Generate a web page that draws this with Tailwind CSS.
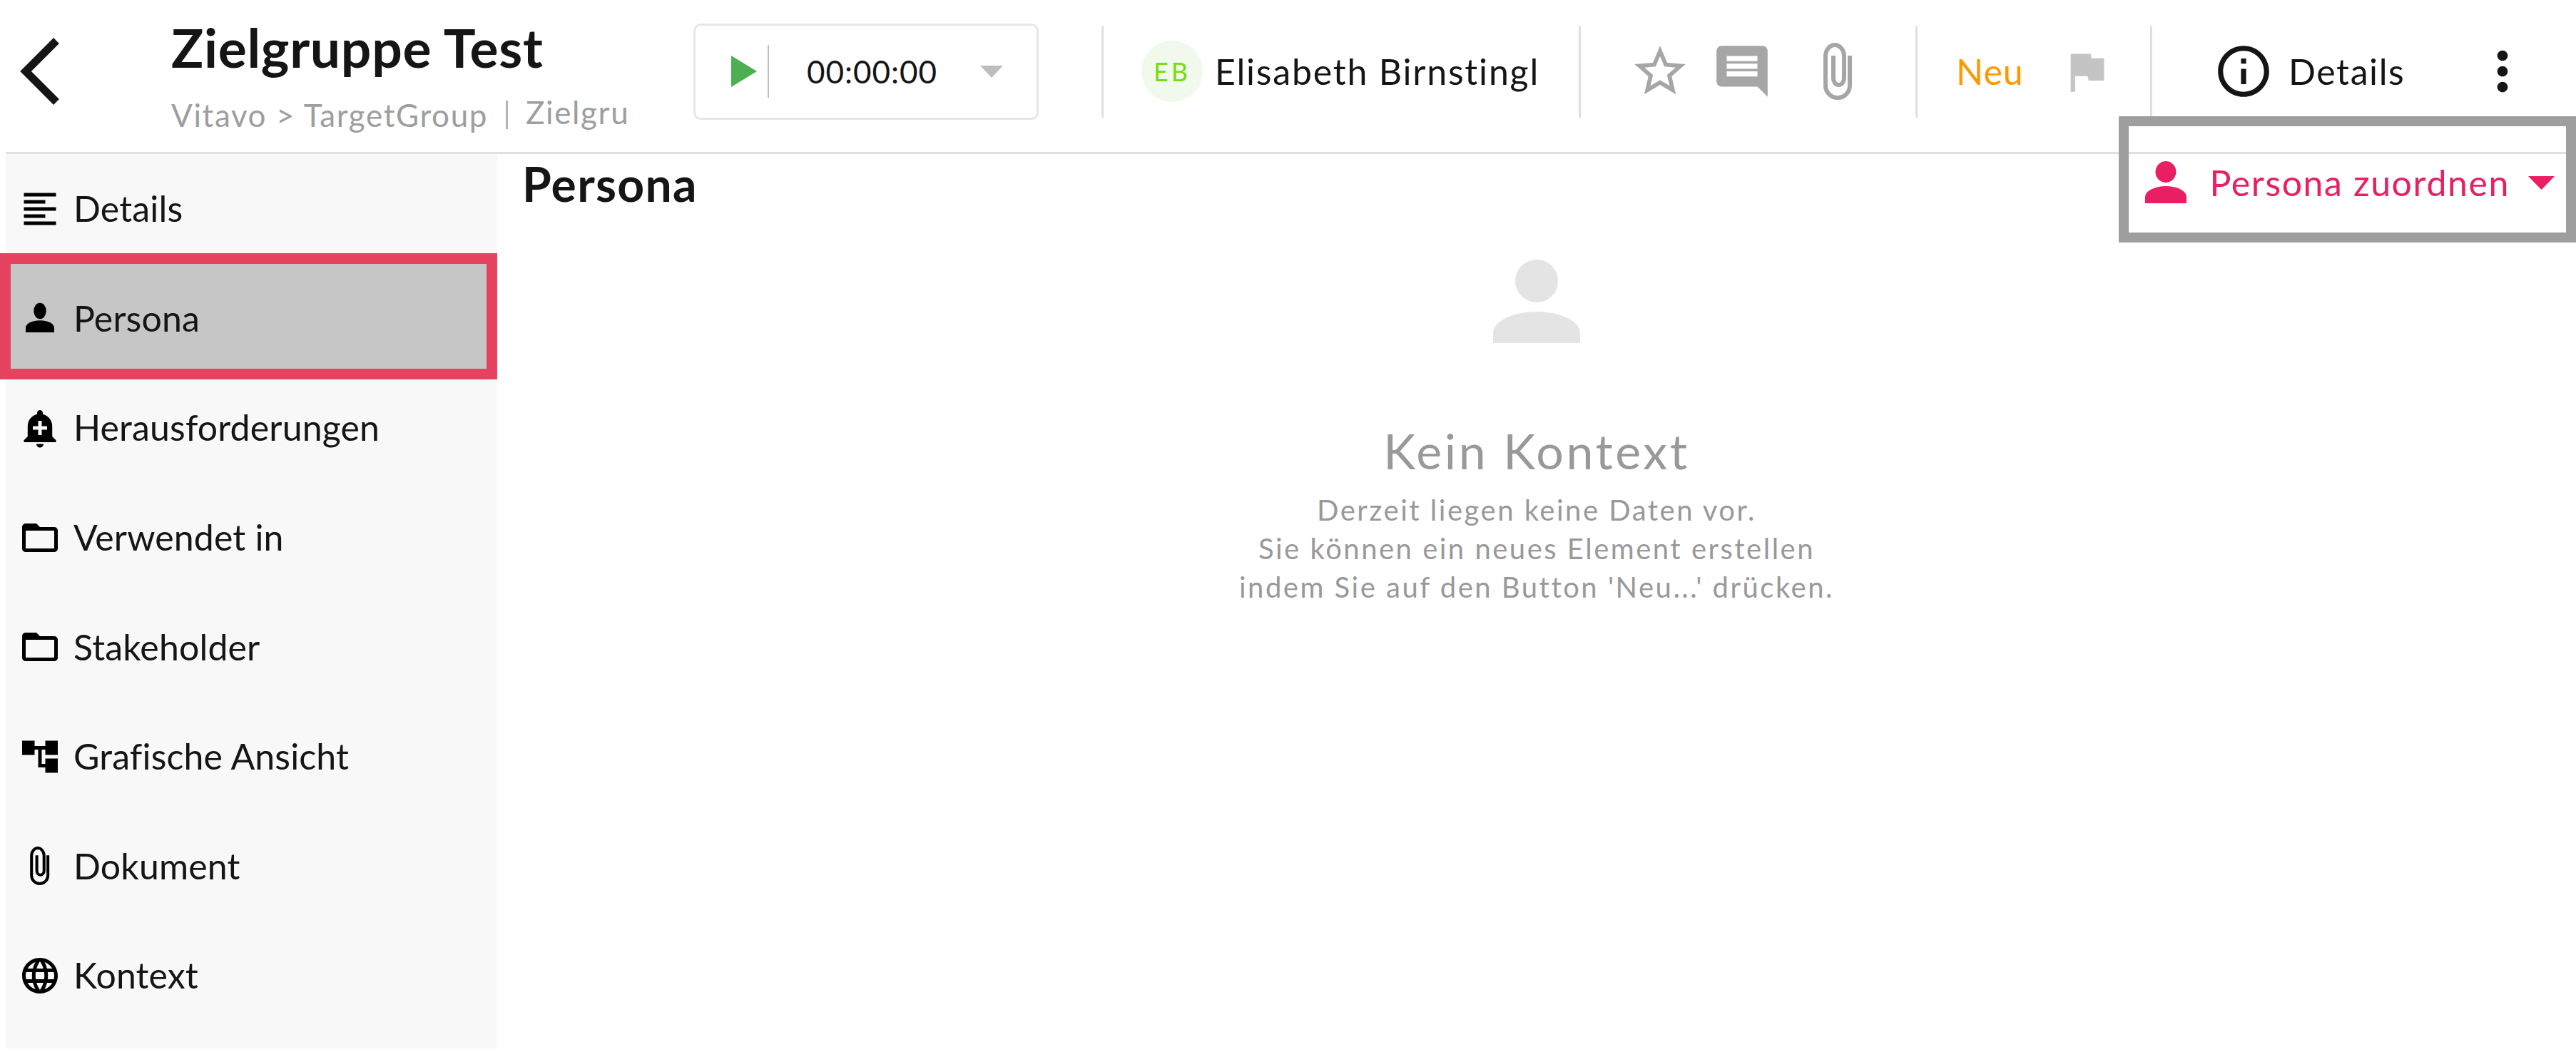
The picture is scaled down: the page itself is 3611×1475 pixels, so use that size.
<!DOCTYPE html>
<html lang="de">
<head>
    <meta charset="UTF-8">
    <title>Zielgruppe Test</title>
    <script src="https://cdn.jsdelivr.net/npm/@tailwindcss/browser@4"></script>
</head>
<body class="font-[Lato,sans-serif] bg-white text-[#151515]">
    <div class="relative w-[3611px] h-[1475px] overflow-hidden flex flex-col">

        <!-- top bar -->
        <header class="ml-[8px] h-[216px] pb-[13px] border-b-[3px] border-[#e0e0e0] flex items-center shrink-0">
            <div class="w-[232px] pl-[17px] shrink-0">
                <svg width="60" height="100" viewBox="0 0 60 100" fill="none" stroke="#151515" stroke-width="11"><polyline points="54,7 11,50 54,93" /></svg>
            </div>
            <div class="w-[732px] pt-[16px] shrink-0">
                <div class="text-[75px] leading-[86px] font-bold tracking-[0.7px]">Zielgruppe Test</div>
                <div class="flex items-center text-[44px] leading-[56px] tracking-[1.6px] text-[#9e9e9e] mt-[20px]">
                    <span>Vitavo &gt; TargetGroup</span>
                    <span class="w-[3px] h-[40px] bg-[#b5b5b5] mx-[25px]"></span>
                    <span class="mb-[8px]">Zielgru</span>
                </div>
            </div>
            <div class="w-[484px] h-[135px] border-[3px] border-[#e6e6e6] rounded-[10px] flex items-center shrink-0">
                <svg class="ml-[50px]" width="36" height="44" viewBox="0 0 36 44"><polygon points="0,0 36,22 0,44" fill="#4caf50" /></svg>
                <span class="w-[2px] h-[74px] bg-[#bdbdbd] ml-[15px]"></span>
                <span class="text-[44px] tracking-[1px] ml-[53px] w-[243px]">00:00:00</span>
                <svg width="32" height="17" viewBox="0 0 32 17"><polygon points="0,0 32,0 16,17" fill="#bdbdbd" /></svg>
            </div>
            <span class="w-[3px] h-[129px] bg-[#e0e0e0] ml-[88px] shrink-0"></span>
            <div class="w-[86px] h-[86px] rounded-full bg-[#f1f9ec] text-[#76dd0a] text-[36px] tracking-[4px] flex items-center justify-center ml-[53px] shrink-0">EB</div>
            <div class="w-[527px] pl-[17px] text-[50px] tracking-[1.8px] whitespace-nowrap shrink-0">Elisabeth Birnstingl</div>
            <span class="w-[3px] h-[129px] bg-[#e0e0e0] shrink-0"></span>
            <svg class="ml-[68px] shrink-0" width="86" height="86" viewBox="0 0 24 24" fill="#a6a6a6"><path d="M22 9.24l-7.19-.62L12 2 9.19 8.63 2 9.24l5.46 4.73L5.82 21 12 17.27 18.18 21l-1.63-7.03L22 9.24zM12 15.4l-3.76 2.27 1-4.28-3.32-2.88 4.38-.38L12 6.1l1.71 4.04 4.38.38-3.32 2.88 1 4.28L12 15.4z" /></svg>
            <svg class="ml-[29px] shrink-0" width="86" height="86" viewBox="0 0 24 24" fill="#a6a6a6"><path d="M21.99 4c0-1.1-.89-2-1.99-2H4c-1.1 0-2 .9-2 2v12c0 1.1.9 2 2 2h14l4 4-.01-18zM18 14H6v-2h12v2zm0-3H6V9h12v2zm0-3H6V6h12v2z" /></svg>
            <svg class="ml-[71px] shrink-0" width="41" height="80" viewBox="0 0 41 80" fill="none" stroke="#a6a6a6" stroke-width="6"><path d="M37 18 V60 A17 17 0 0 1 3 60 V19 A13 16 0 0 1 29 19 V50 A7.5 9 0 0 1 14 50 V18" /></svg>
            <span class="w-[3px] h-[129px] bg-[#e0e0e0] ml-[88px] shrink-0"></span>
            <span class="w-[145px] ml-[54px] text-[50px] tracking-[1px] text-[#ff9800] shrink-0">Neu</span>
            <svg class="shrink-0" width="75" height="75" viewBox="0 0 24 24" fill="#c4c4c4"><path d="M14.4 6L14 4H5v17h2v-7h5.6l.4 2h7V6z" /></svg>
            <span class="w-[3px] h-[129px] bg-[#e0e0e0] ml-[52px] shrink-0"></span>
            <svg class="ml-[85px] shrink-0" width="86" height="86" viewBox="0 0 24 24" fill="#151515"><path d="M11 17h2v-6h-2v6zm1-15C6.48 2 2 6.48 2 12s4.48 10 10 10 10-4.48 10-10S17.52 2 12 2zm0 18c-4.41 0-8-3.59-8-8s3.59-8 8-8 8 3.59 8 8-3.59 8-8 8zM11 9h2V7h-2v2z" /></svg>
            <span class="w-[276px] pl-[20px] text-[50px] tracking-[1.6px] shrink-0">Details</span>
            <svg class="shrink-0" width="88" height="88" viewBox="0 0 24 24" fill="#151515"><path d="M12 8c1.1 0 2-.9 2-2s-.9-2-2-2-2 .9-2 2 .9 2 2 2zm0 2c-1.1 0-2 .9-2 2s.9 2 2 2 2-.9 2-2-.9-2-2-2zm0 6c-1.1 0-2 .9-2 2s.9 2 2 2 2-.9 2-2-.9-2-2-2z" /></svg>
        </header>

        <div class="flex flex-1 min-h-0">
            <!-- side menu -->
            <nav class="ml-[8px] w-[689px] h-[1254px] bg-[#f8f8f8] shrink-0 text-[50px] tracking-[0.15px]">
                <a class="h-[153.6px] flex items-center">
                    <svg class="ml-[18px] shrink-0" width="60" height="60" viewBox="0 0 24 24" fill="#000"><path d="M15 15H3v2h12v-2zm0-8H3v2h12V7zM3 13h18v-2H3v2zm0 8h18v-2H3v2zM3 3v2h18V3H3z" /></svg>
                    <span class="ml-[17px]">Details</span>
                </a>
                <a class="h-[153.6px] flex items-center bg-[#c6c6c6]">
                    <svg class="ml-[18px] shrink-0" width="60" height="60" viewBox="0 0 24 24" fill="#000"><ellipse cx="12" cy="8" rx="3.5" ry="4.5" /><path d="M4 20v-2.5A8 4.2 0 0 1 20 17.5V20z" /></svg>
                    <span class="ml-[17px]">Persona</span>
                </a>
                <a class="h-[153.6px] flex items-center">
                    <svg class="ml-[18px] shrink-0" width="60" height="60" viewBox="0 0 24 24" fill="#000"><path d="M10.01 21.01c0 1.1.89 1.99 1.99 1.99s1.99-.89 1.99-1.99h-3.98zm8.87-4.19V11c0-3.25-2.25-5.97-5.29-6.69v-.72C13.59 2.71 12.88 2 12 2s-1.59.71-1.59 1.59v.72C7.37 5.03 5.12 7.75 5.12 11v5.82L3 18.94V20h18v-1.06l-2.12-2.12zM16 13.01h-3v3h-2v-3H8V11h3V8h2v3h3v2.01z" /></svg>
                    <span class="ml-[17px]">Herausforderungen</span>
                </a>
                <a class="h-[153.6px] flex items-center">
                    <svg class="ml-[18px] shrink-0" width="60" height="60" viewBox="0 0 24 24" fill="#000"><path d="M20 6h-8l-2-2H4c-1.1 0-1.99.9-1.99 2L2 18c0 1.1.9 2 2 2h16c1.1 0 2-.9 2-2V8c0-1.1-.9-2-2-2zm0 12H4V8h16v10z" /></svg>
                    <span class="ml-[17px]">Verwendet in</span>
                </a>
                <a class="h-[153.6px] flex items-center">
                    <svg class="ml-[18px] shrink-0" width="60" height="60" viewBox="0 0 24 24" fill="#000"><path d="M20 6h-8l-2-2H4c-1.1 0-1.99.9-1.99 2L2 18c0 1.1.9 2 2 2h16c1.1 0 2-.9 2-2V8c0-1.1-.9-2-2-2zm0 12H4V8h16v10z" /></svg>
                    <span class="ml-[17px]">Stakeholder</span>
                </a>
                <a class="h-[153.6px] flex items-center">
                    <svg class="ml-[18px] shrink-0" width="60" height="60" viewBox="0 0 24 24" fill="#000"><path d="M22 11V3h-7v3H9V3H2v8h7V8h2v10h4v3h7v-8h-7v3h-2V8h2v3z" /></svg>
                    <span class="ml-[17px]">Grafische Ansicht</span>
                </a>
                <a class="h-[153.6px] flex items-center">
                    <svg class="ml-[34px] mr-[16px] shrink-0" width="28" height="54" viewBox="0 0 41 80" fill="none" stroke="#000" stroke-width="6"><path d="M37 18 V60 A17 17 0 0 1 3 60 V19 A13 16 0 0 1 29 19 V50 A7.5 9 0 0 1 14 50 V18" /></svg>
                    <span class="ml-[17px]">Dokument</span>
                </a>
                <a class="h-[153.6px] flex items-center">
                    <svg class="ml-[18px] shrink-0" width="60" height="60" viewBox="0 0 24 24" fill="#000"><path d="M11.99 2C6.47 2 2 6.48 2 12s4.47 10 9.99 10C17.52 22 22 17.52 22 12S17.52 2 11.99 2zm6.93 6h-2.95c-.32-1.25-.78-2.45-1.38-3.56 1.84.63 3.37 1.91 4.33 3.56zM12 4.04c.83 1.2 1.48 2.53 1.91 3.96h-3.82c.43-1.43 1.08-2.76 1.91-3.96zM4.26 14C4.1 13.36 4 12.69 4 12s.1-1.36.26-2h3.38c-.08.66-.14 1.32-.14 2 0 .68.06 1.34.14 2H4.26zm.82 2h2.95c.32 1.25.78 2.45 1.38 3.56-1.84-.63-3.37-1.9-4.33-3.56zm2.95-8H5.08c.96-1.66 2.49-2.93 4.33-3.56C8.81 5.55 8.35 6.75 8.03 8zM12 19.96c-.83-1.2-1.48-2.53-1.91-3.96h3.82c-.43 1.43-1.08 2.76-1.91 3.96zM14.34 14H9.66c-.09-.66-.16-1.32-.16-2 0-.68.07-1.35.16-2h4.68c.09.65.16 1.32.16 2 0 .68-.07 1.34-.16 2zm.25 5.56c.6-1.11 1.06-2.31 1.38-3.56h2.95c-.96 1.65-2.49 2.93-4.33 3.56zM16.36 14c.08-.66.14-1.32.14-2 0-.68-.06-1.34-.14-2h3.38c.16.64.26 1.31.26 2s-.1 1.36-.26 2h-3.38z" /></svg>
                    <span class="ml-[17px]">Kontext</span>
                </a>
            </nav>

            <!-- content -->
            <main class="flex-1 min-w-0">
                <div class="h-[148px] pl-[35px] pr-[30px] flex justify-between items-start">
                    <h1 class="text-[66px] leading-[84px] font-bold tracking-[1.3px]">Persona</h1>
                    <button class="flex items-center text-[50px] tracking-[1.6px] text-[#e91e63] h-[80px]">
                        <svg width="58" height="60" viewBox="0 0 58 60" fill="#e91e63"><ellipse cx="29" cy="15" rx="14.5" ry="15" /><path d="M0 59V50A29 15 0 0 1 58 50v9z" /></svg>
                        <span class="ml-[32px]">Persona zuordnen</span>
                        <svg class="ml-[26px]" width="37" height="19" viewBox="0 0 37 19"><polygon points="0,0 37,0 18.5,19" fill="#e91e63" /></svg>
                    </button>
                </div>
                <div class="flex flex-col items-center text-[#999]">
                    <svg width="122" height="117" viewBox="0 0 122 117" fill="#e4e4e4"><ellipse cx="61" cy="30" rx="30" ry="30" /><path d="M0 117V103A61 30 0 0 1 122 103v14z" /></svg>
                    <div class="text-[68px] leading-[80px] tracking-[3.6px] mt-[111px]">Kein Kontext</div>
                    <div class="text-[40px] leading-[54px] tracking-[2.5px] text-center mt-[16px]">
                        <p>Derzeit liegen keine Daten vor.</p>
                        <p>Sie können ein neues Element erstellen</p>
                        <p>indem Sie auf den Button 'Neu...' drücken.</p>
                    </div>
                </div>
            </main>
        </div>

        <!-- annotation frames lying over the screenshot -->
        <div class="absolute left-0 top-[355px] w-[697px] h-[177px] border-[15px] border-[#e64361]"></div>
        <div class="absolute right-0 top-[163px] w-[641px] h-[177px] border-[14px] border-[#9e9e9e]"></div>
    </div>
</body>
</html>
